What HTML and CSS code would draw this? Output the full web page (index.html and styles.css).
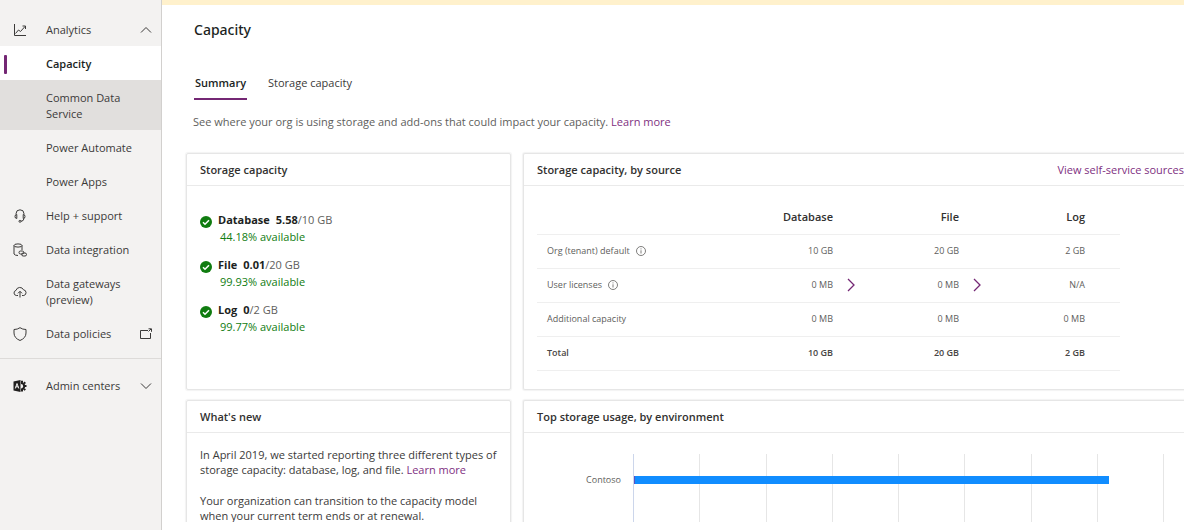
FILE: index.html
```html
<!DOCTYPE html>
<html lang="en">
<head>
<meta charset="utf-8">
<title>Capacity</title>
<link rel="stylesheet" href="styles.css">
</head>
<body>
<div class="app">
  <nav class="sidebar" aria-label="Main">
    <button class="nav-item nav-group" type="button">
      <svg class="nav-icon" viewBox="0 0 14 14"><path d="M1.500 1v11.500H13M2.500 10.500l3-3.500 2 1.500L12 3.500M9.500 3h3v3"/></svg>
      <span class="nav-label">Analytics</span>
      <svg class="nav-end" viewBox="0 0 12 12"><path d="M1 8.500l5-5 5 5"/></svg>
    </button>
    <a class="nav-item current" href="#"><span class="nav-label">Capacity</span></a>
    <a class="nav-item hovered" href="#"><span class="nav-label">Common Data Service</span></a>
    <a class="nav-item" href="#"><span class="nav-label">Power Automate</span></a>
    <a class="nav-item" href="#"><span class="nav-label">Power Apps</span></a>
    <a class="nav-item nav-group" href="#">
      <svg class="nav-icon" viewBox="0 0 14 14"><path d="M3 5.500V4.800a4 4 0 0 1 8 0v.7M3.800 5.500v4Q2 9.500 2 7.500T3.800 5.500zM10.200 5.500v4Q12 9.500 12 7.500T10.200 5.500zM11 9.500q-.3 2.600-3 2.800"/><circle cx="7" cy="12.300" r="1"/></svg>
      <span class="nav-label">Help + support</span>
    </a>
    <a class="nav-item nav-group" href="#">
      <svg class="nav-icon" viewBox="0 0 14 14"><ellipse cx="5" cy="2.500" rx="4" ry="1.600"/><path d="M1 2.500v8.500q1 1.500 4 1.500M9 2.500V7"/><rect x="6" y="8" width="4.800" height="3" rx="1.500"/><rect x="8.700" y="10" width="4.800" height="3" rx="1.500"/></svg>
      <span class="nav-label">Data integration</span>
    </a>
    <a class="nav-item nav-group" href="#">
      <svg class="nav-icon" viewBox="0 0 14 14"><path d="M5 10.500H3.300A2.600 2.600 0 0 1 3 5.400 4 4 0 0 1 10.500 4.800a2.900 2.900 0 0 1 .3 5.700H9M7 12.500V6.500M5 8.300l2-2 2 2"/></svg>
      <span class="nav-label">Data gateways (preview)</span>
    </a>
    <a class="nav-item nav-group" href="#">
      <svg class="nav-icon" viewBox="0 0 14 14"><path d="M7 .7Q9.500 2.500 13 2.500V6q0 5-6 7.500Q1 11 1 6V2.500Q4.500 2.500 7 .7z"/></svg>
      <span class="nav-label">Data policies</span>
      <svg class="nav-end" viewBox="0 0 12 12"><path d="M8 2.500H.5v8h10V5M8.500 3.500L11 1M8.500.8h3v3"/></svg>
    </a>
    <button class="nav-item nav-group admin" type="button">
      <svg class="nav-icon" viewBox="0 0 14 14"><path class="gear" d="M8 4a3.200 3.200 0 0 1 0 6.400"/><path class="gear" d="M9 1.800v2M9 10.600v2M11 4.400l1.300-1.100M11.500 7.100h2M11 9.900l1.300 1.100"/><path class="solid" d="M.5 2.500L7.500 1v12L.5 11.500z"/><path class="cutout" d="M2.300 9.500L4 4.500l1.800 5M2.800 7.800h2.500"/></svg>
      <span class="nav-label">Admin centers</span>
      <svg class="nav-end" viewBox="0 0 12 12"><path d="M1 3.500l5 5 5-5"/></svg>
    </button>
  </nav>

  <main class="main">
    <div class="banner"></div>
    <h1 class="title">Capacity</h1>
    <div class="tabs" role="tablist">
      <button class="tab selected" type="button" role="tab" aria-selected="true">Summary</button>
      <button class="tab" type="button" role="tab" aria-selected="false">Storage capacity</button>
    </div>
    <p class="intro">See where your org is using storage and add-ons that could impact your capacity. <a class="link" href="#">Learn more</a></p>

    <div class="cards">
      <section class="card">
        <header class="card-head"><h2>Storage capacity</h2></header>
        <ul class="usage">
          <li>
            <svg class="ok" viewBox="0 0 12 12"><circle cx="6" cy="6" r="6"/><path d="M3 6.200l2 2 4-4"/></svg>
            <div><p><b>Database</b><b class="used">5.58</b>/10 GB</p><p class="avail">44.18% available</p></div>
          </li>
          <li>
            <svg class="ok" viewBox="0 0 12 12"><circle cx="6" cy="6" r="6"/><path d="M3 6.200l2 2 4-4"/></svg>
            <div><p><b>File</b><b class="used">0.01</b>/20 GB</p><p class="avail">99.93% available</p></div>
          </li>
          <li>
            <svg class="ok" viewBox="0 0 12 12"><circle cx="6" cy="6" r="6"/><path d="M3 6.200l2 2 4-4"/></svg>
            <div><p><b>Log</b><b class="used">0</b>/2 GB</p><p class="avail">99.77% available</p></div>
          </li>
        </ul>
      </section>

      <section class="card wide">
        <header class="card-head"><h2>Storage capacity, by source</h2><a class="link" href="#">View self-service sources</a></header>
        <table class="sources">
          <thead>
            <tr><td></td><th scope="col">Database</th><th scope="col">File</th><th scope="col">Log</th></tr>
          </thead>
          <tbody>
            <tr>
              <th scope="row"><span class="name">Org (tenant) default <svg class="info" viewBox="0 0 10 10"><circle cx="5" cy="5" r="4.500"/><path d="M5 4.300V7.500M5 2.400v1"/></svg></span></th>
              <td>10 GB</td><td>20 GB</td><td>2 GB</td>
            </tr>
            <tr>
              <th scope="row"><span class="name">User licenses <svg class="info" viewBox="0 0 10 10"><circle cx="5" cy="5" r="4.500"/><path d="M5 4.300V7.500M5 2.400v1"/></svg></span></th>
              <td class="more"><span class="value">0 MB <button type="button" aria-label="Database details"><svg viewBox="0 0 8 14"><path d="M1 1l6 6-6 6"/></svg></button></span></td>
              <td class="more"><span class="value">0 MB <button type="button" aria-label="File details"><svg viewBox="0 0 8 14"><path d="M1 1l6 6-6 6"/></svg></button></span></td>
              <td>N/A</td>
            </tr>
            <tr><th scope="row">Additional capacity</th><td>0 MB</td><td>0 MB</td><td>0 MB</td></tr>
            <tr class="total"><th scope="row">Total</th><td>10 GB</td><td>20 GB</td><td>2 GB</td></tr>
          </tbody>
        </table>
      </section>

      <section class="card">
        <header class="card-head"><h2>What's new</h2></header>
        <div class="news">
          <p>In April 2019, we started reporting three different types of storage capacity: database, log, and file. <a class="link" href="#">Learn more</a></p>
          <p>Your organization can transition to the capacity model when your current term ends or at renewal.</p>
        </div>
      </section>

      <section class="card wide">
        <header class="card-head"><h2>Top storage usage, by environment</h2></header>
        <div class="chart">
          <span class="category">Contoso</span>
          <div class="plot">
            <div class="gridlines"><i></i><i></i><i></i><i></i><i></i><i></i><i></i><i></i></div>
            <div class="bar" style="width: 89.4%"></div>
          </div>
        </div>
      </section>
    </div>
  </main>
</div>
</body>
</html>
```
FILE: styles.css
```css
* { box-sizing: border-box; }

body {
  margin: 0;
  background: #fff;
  color: #3b3a39;
  font: 11px/16px "Open Sans", "Noto Sans", sans-serif;
}

h1, h2, p, ul { margin: 0; padding: 0; }
button { font: inherit; color: inherit; background: none; border: 0; padding: 0; }
a { color: inherit; text-decoration: none; }
svg { flex: none; fill: none; stroke: currentColor; }
.link { color: #80307f; }

.app { display: flex; height: 100vh; overflow: hidden; }

/* Sidebar */
.sidebar {
  flex: none;
  width: 162px;
  padding-top: 12px;
  background: #f3f2f1;
  border-right: 1px solid #d2d0ce;
}
.nav-item {
  display: flex;
  align-items: center;
  width: 100%;
  min-height: 34px;
  padding: 10px 9px 8px 46px;
  text-align: left;
}
.nav-group { padding-left: 13px; }
.nav-label { flex: 1; padding-right: 16px; }
.nav-group .nav-label { padding-right: 0; }
.nav-icon { width: 14px; height: 14px; margin-right: 19px; }
.nav-end { width: 12px; height: 12px; }
.current {
  background: #fff;
  font-weight: 600;
  color: #201f1e;
  padding-left: 39px;
}
.current::before {
  content: "";
  width: 3px;
  height: 19px;
  margin: -2px 39px -2px -35px;
  border-radius: 1px;
  background: #742774;
}
.hovered { background: #e1dfdd; }
.admin {
  margin-top: 8px;
  padding-top: 19px;
  border-top: 1px solid #dddbd9;
}
.solid { fill: #201f1e; stroke: none; }
.gear { stroke: #201f1e; stroke-width: 2; }
.cutout { stroke: #f3f2f1; }

/* Page header */
.main {
  flex: 1;
  min-width: 0;
  margin-bottom: 8px;
  overflow: hidden;
}
.banner { height: 5px; background: #fff1cc; }
.title {
  padding: 15px 32px 0;
  font-family: "Noto Sans", "Open Sans", sans-serif;
  font-size: 14px;
  line-height: 20px;
  font-weight: 500;
  color: #201f1e;
}
.tabs { display: flex; gap: 20px; padding: 27px 32px 0; }
.tab { padding: 8px 1px 7px; border-bottom: 2px solid transparent; }
.selected { font-weight: 600; color: #201f1e; border-color: #742774; }
.intro { padding: 14px 31px 23px; color: #605e5c; }

/* Cards */
.cards {
  display: grid;
  grid-template-columns: 325px 1fr;
  gap: 10px 12px;
  padding-left: 24px;
}
.card {
  border: 1px solid #e6e6e6;
  border-radius: 2px;
  box-shadow: 0 0 1px 1px #f3f3f3;
  min-height: 237px;
}
.wide { border-right: 0; border-radius: 2px 0 0 2px; }
.card-head {
  display: flex;
  justify-content: space-between;
  padding: 8px 0 7px 13px;
  border-bottom: 1px solid #eaeaea;
}
.card-head h2 { font-size: 11px; line-height: 16px; font-weight: 600; color: #323130; }

.usage { list-style: none; padding: 25px 13px; }
.usage li { display: flex; gap: 6px; margin-bottom: 11px; color: #605e5c; }
.usage p { line-height: 17px; }
.usage b { font-weight: 700; color: #201f1e; }
.usage .used { margin-left: 6px; }
.usage .avail { padding-left: 2px; color: #107c10; }
.ok { width: 12px; height: 12px; margin-top: 5px; }
.ok circle { fill: #107c10; stroke: none; }
.ok path { stroke: #fff; stroke-width: 1.5; }

/* Capacity by source */
.sources {
  width: calc(100% - 77px);
  margin: 14px 64px 0 13px;
  border-collapse: collapse;
  table-layout: fixed;
  color: #605e5c;
  font-size: 9px;
  line-height: 16px;
}
.sources th, .sources td {
  height: 34px;
  width: 126px;
  padding: 0 35px 0 0;
  border-bottom: 1px solid #efefef;
  text-align: right;
  font-weight: 400;
}
.sources th[scope="row"], .sources td:first-child {
  width: auto;
  padding: 0 0 0 10px;
  text-align: left;
}
.sources th[scope="col"] { font-size: 11px; font-weight: 600; color: #323130; }
.sources .total th, .sources .total td { font-weight: 600; color: #484644; }
.sources .more { padding-right: 13px; }
.name { display: flex; align-items: center; gap: 6px; }
.info { width: 10px; height: 10px; stroke-width: 0.8; }
.value { display: flex; justify-content: flex-end; align-items: center; }
.value button { width: 22px; height: 16px; color: #742774; }
.value svg { display: block; width: 8px; height: 14px; margin-left: auto; stroke-width: 1.3; }

.news { padding: 14px 8px 13px 13px; line-height: 15px; }
.news p + p { margin-top: 16px; }

/* Environment chart */
.chart { display: flex; padding: 21px 20px 0 13px; height: 160px; }
.category {
  width: 96px;
  padding: 18px 12px 0 0;
  font-size: 9px;
  text-align: right;
  color: #605e5c;
}
.plot { flex: 1; display: grid; }
.plot > * { grid-area: 1 / 1; }
.gridlines {
  display: grid;
  grid-template-columns: repeat(8, 1fr);
  border-right: 1px solid #e6e6e6;
}
.gridlines i { border-left: 1px solid #e6e6e6; }
.gridlines i:first-child { border-color: #ccd6eb; }
.bar {
  height: 8px;
  margin: 22px 0 0 1px;
  border-left: 1px solid #5b4fc4;
  background: #118dff;
}
```
